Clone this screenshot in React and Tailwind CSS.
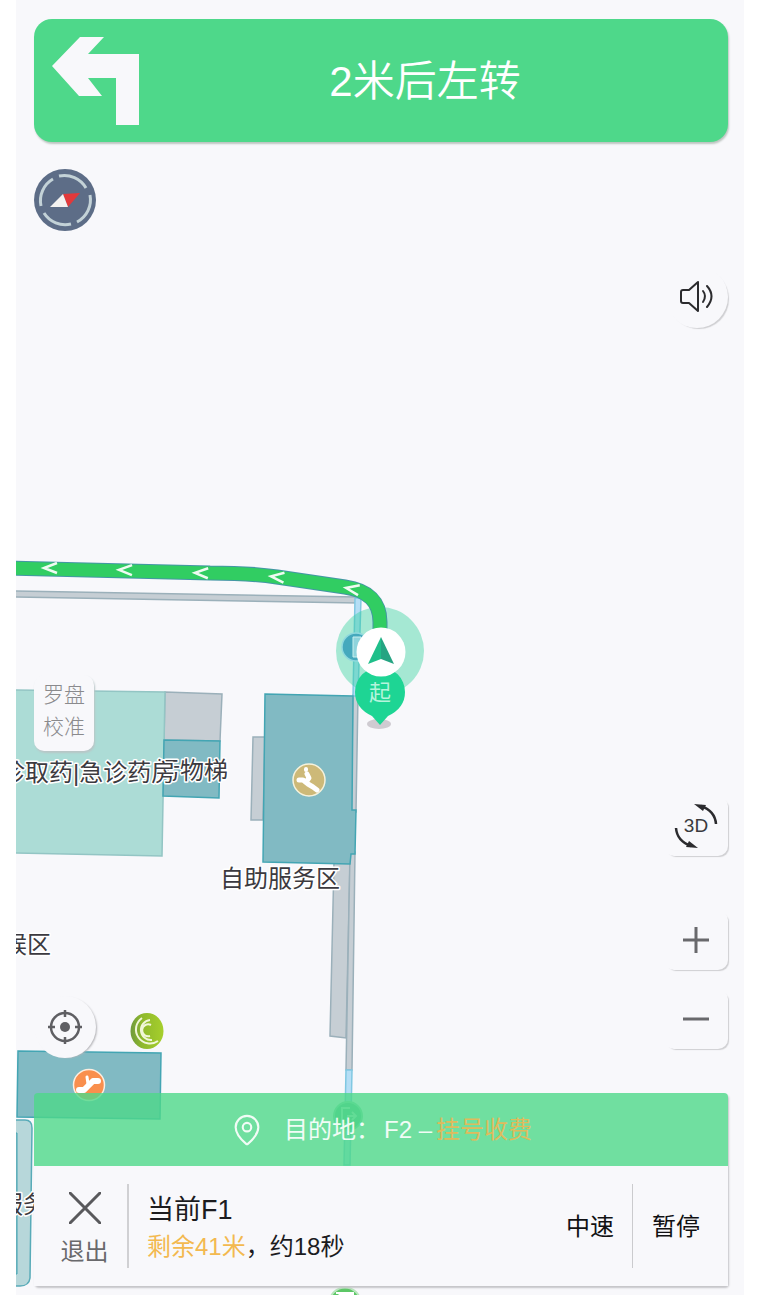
import { MapPin } from 'lucide-react';

const chevrons = [
  [50, 568, 0],
  [125, 570, 1],
  [201, 573, 2],
  [277, 577, 6],
  [352, 589, 10],
];

const labels = [
  { text: '污物梯', x: 156, y: 779 },
  { text: '诊取药|急诊药房', x: 1, y: 781 },
  { text: '自助服务区', x: 220, y: 887 },
  { text: '候区', x: 3, y: 953 },
  { text: '服务', x: -1, y: 1213 },
];

const routePath = 'M10 568L210 573Q250 573 277 577L345 587Q380 592 380 622V640';

function FloorMap() {
  return (
    <svg className="absolute inset-0 h-full w-full" aria-hidden="true">
      <defs>
        <linearGradient id="leaf" x1="0" y1="0" x2="1" y2="0">
          <stop offset="0" stopColor="#6f9a3c" />
          <stop offset="0.35" stopColor="#8fb92c" />
          <stop offset="1" stopColor="#a6cf2c" />
        </linearGradient>
      </defs>
      <g transform="translate(-16 0)">
        {/* corridors */}
        <g fill="#c6ced4" stroke="#9bb0ba" strokeWidth="1.5">
          <path d="M10 591L358 597V603L10 597Z" />
          <path d="M253 737H265L263 820H251Z" />
          <path d="M334 862H350L346 1038L330 1036Z" />
          <path d="M353 695H358L356 812H351Z" />
          <path d="M350 852H355L352 1070H346Z" />
          <path d="M165 692L222 694L220 741L164 740Z" />
        </g>
        <g fill="#b5def5" stroke="#80c8e2" strokeWidth="1.5">
          <path d="M355 598H361L358 696H353Z" />
          <path d="M346 1070H352L350 1165H344Z" />
        </g>

        {/* rooms */}
        <path d="M10 690L165 692L162 856L10 853Z" fill="#acdcd6" stroke="#93c5c4" strokeWidth="1.5" />
        <g fill="#81bac3" stroke="#43a5b3" strokeWidth="1.5">
          <path d="M164 740L220 741L219 798L163 796Z" />
          <path d="M265 694L353 696L352 810H356L355 854H351L350 864L263 862Z" />
          <path d="M18 1051L161 1053L160 1119L17 1117Z" />
        </g>
        <path
          d="M10 1120H25Q32 1120 32 1128L30 1278Q29 1286 20 1286H10Z"
          fill="#b7d7da"
          stroke="#58abb8"
          strokeWidth="1.5"
        />
        <path d="M10 1133H17V1274H10Z" fill="#81bac3" stroke="#43a5b3" />

        {/* stairs */}
        <circle cx="309" cy="780" r="16" fill="#cdb978" stroke="#f6f2dc" strokeWidth="1.5" />
        <g fill="none" stroke="#fff" strokeLinecap="round" strokeLinejoin="round">
          <path d="M299 780H303L308 784L313 787L317 790" strokeWidth="5" />
          <path d="M307 774L309 778L306 782" strokeWidth="5" />
          <path d="M306 769V770" strokeWidth="4" />
        </g>

        {/* escalator */}
        <circle cx="89" cy="1085" r="15.5" fill="#f98f4d" stroke="#fdeee0" strokeWidth="1.5" />
        <path d="M79 1090H84L93 1081H98" fill="none" stroke="#fff" strokeWidth="6" strokeLinecap="round" strokeLinejoin="round" />
        <path d="M87 1077L88 1084" stroke="#fff" strokeWidth="3" strokeLinecap="round" />

        {/* atm */}
        <ellipse cx="147" cy="1031" rx="16.5" ry="18" fill="url(#leaf)" />
        <g fill="none" stroke="#f1f7d8" strokeWidth="2">
          <path d="M142 1018A14 14 0 1 0 158 1041" />
          <path d="M150 1020A10 10 0 1 0 152 1040" />
          <path d="M151 1025A6 6 0 1 0 150 1036" />
        </g>

        {/* exits */}
        <g fill="none" strokeWidth="2">
          <circle cx="348" cy="1116" r="14" fill="#5fc08f" stroke="#8fdcae" />
          <path d="M350 1108H342V1124H350M347 1116H355M352 1112L356 1116L352 1120" stroke="#b5e8c8" />
          <circle cx="345" cy="1303" r="15.5" fill="#5cc766" stroke="#b9e6bd" />
          <path d="M336 1293H353V1303" fill="#fff" stroke="#fff" />
        </g>

        {/* current position */}
        <circle cx="380" cy="651" r="44" fill="#27cf99" fillOpacity="0.4" />
        <circle cx="356" cy="647" r="14" fill="#45a9bd" stroke="#8fd9dd" strokeWidth="1.5" />
        <path d="M353 637H361V657H353Z" fill="#8fd4dc" stroke="#c9f0ee" />

        {/* route */}
        <path d={routePath} fill="none" stroke="#4496a5" strokeWidth="15" />
        <path d={routePath} fill="none" stroke="#31cd62" strokeWidth="13" />
        {chevrons.map(([x, y, angle]) => (
          <path
            key={x}
            d="M7 -5L-6 0L7 5"
            fill="none"
            stroke="#f0fbf2"
            strokeWidth="2.5"
            transform={`translate(${x} ${y}) rotate(${angle})`}
          />
        ))}

        {/* start pin */}
        <ellipse cx="379" cy="724" rx="12" ry="5" fill="#cfcbd1" />
        <path d="M380 725L372 716Q355 708 355 692A25 25 0 0 1 405 692Q405 708 388 716Z" fill="#1ed594" />
        <text x="380" y="700" textAnchor="middle" fontSize="22" fill="#b5f4dc">起</text>
        <circle cx="381" cy="652" r="24.5" fill="#fff" />
        <path d="M381 637L368 664L381 659Z" fill="#1fbf8a" />
        <path d="M381 637L394 664L381 659Z" fill="#25a482" />

        {labels.map((l) => (
          <text
            key={l.text}
            x={l.x}
            y={l.y}
            fontSize="24"
            fill="#3c3a40"
            stroke="#fff"
            strokeWidth="3"
            strokeLinejoin="round"
            paintOrder="stroke"
          >
            {l.text}
          </text>
        ))}
      </g>
    </svg>
  );
}

function SquareButton({ label, className = '', children }) {
  return (
    <button
      type="button"
      aria-label={label}
      className={`flex h-[60px] w-16 items-center justify-center rounded-[10px] bg-[#f8f8fb] shadow-[2px_2px_1px_-1px_#cfcfd2] ${className}`}
    >
      {children}
    </button>
  );
}

function TurnBanner() {
  return (
    <header className="flex h-[123px] items-start rounded-[18px] bg-[#4ed88a] px-[18px] pt-[17px] shadow-[1px_2px_2px_#bcc5c0]">
      <svg width="88" height="89" viewBox="0 0 88 89" fill="#f8f8fb" aria-hidden="true">
        <path d="M0 30L28 1H52L36 18H87V89H64V42H36L50 60H27Z" />
      </svg>
      <h1 className="flex-1 text-center text-[42px] leading-[92px] font-[350] text-white">2米后左转</h1>
    </header>
  );
}

function MapControls() {
  return (
    <div className="flex flex-1 justify-between">
      <div className="flex flex-col pt-[27px] pb-[35px]">
        <button type="button" aria-label="指南针">
          <svg width="62" height="62" viewBox="0 0 62 62" fill="none" aria-hidden="true">
            <circle cx="31" cy="31" r="31" fill="#5d6d87" />
            <g stroke="#c3d2d7" strokeWidth="3">
              <path d="M25 7A25 25 0 0 1 52 19" />
              <path d="M56 26A25 25 0 0 1 43 53" />
              <path d="M37 55A25 25 0 0 1 10 44" />
              <path d="M7 37A25 25 0 0 1 19 10" />
            </g>
            <path d="M29 25L46 24L34 38Z" fill="#e2393b" />
            <path d="M29 25L16 38H34Z" fill="#f4f2f0" />
          </svg>
        </button>
        <button
          type="button"
          className="mt-auto w-[60px] rounded-[10px] bg-[#f8f8fb] px-2 pt-1 pb-2 text-[21px] leading-8 font-light text-[#8a8a8d] shadow-[1px_2px_2px_#b9c6c7]"
        >
          罗盘校准
        </button>
        <button
          type="button"
          aria-label="定位"
          className="mt-[245px] flex h-[62px] w-[62px] items-center justify-center rounded-full bg-[#f8f8fb] shadow-[2px_1px_2px_-1px_#b4b4b8]"
        >
          <svg width="36" height="36" viewBox="0 0 36 36" fill="none" stroke="#5f5f63" strokeWidth="2.5" aria-hidden="true">
            <circle cx="18" cy="18" r="14" />
            <circle cx="18" cy="18" r="5" fill="#5f5f63" stroke="none" />
            <path d="M18 1V8M18 28V35M1 18H8M28 18H35" />
          </svg>
        </button>
      </div>

      <div className="flex flex-col items-end pt-[124px] pb-11">
        <button
          type="button"
          aria-label="声音"
          className="flex h-[62px] w-[62px] items-center justify-center rounded-full bg-[#f8f8fb] shadow-[2px_2px_1px_-1px_#cfcfd2]"
        >
          <svg
            width="34"
            height="34"
            viewBox="0 0 34 34"
            fill="none"
            stroke="#2b2b2e"
            strokeWidth="2"
            strokeLinecap="round"
            strokeLinejoin="round"
            aria-hidden="true"
          >
            <path d="M3 10H9L18 2V31L9 23H3Q1 23 1 21V12Q1 10 3 10Z" />
            <path d="M23 11Q27 16 23 22" />
            <path d="M27 6Q36 16 27 27" />
          </svg>
        </button>
        <SquareButton label="3D" className="mt-auto">
          <svg width="44" height="44" viewBox="0 0 44 44" fill="none" stroke="#2b2b2e" strokeWidth="2.5" aria-hidden="true">
            <path d="M27 2Q41 7 42 20" />
            <path d="M20 0L32 1L29 7Z" fill="#2b2b2e" stroke="none" />
            <path d="M2 24Q3 37 17 42" />
            <path d="M24 44L12 43L15 37Z" fill="#2b2b2e" stroke="none" />
            <text x="22" y="28" textAnchor="middle" fontSize="19" fill="#3a3a3d" stroke="none">
              3D
            </text>
          </svg>
        </SquareButton>
        <SquareButton label="放大" className="mt-[54px]">
          <svg width="26" height="26" viewBox="0 0 26 26" stroke="#69696c" strokeWidth="3" aria-hidden="true">
            <path d="M13 0V26M0 13H26" />
          </svg>
        </SquareButton>
        <SquareButton label="缩小" className="mt-[19px]">
          <svg width="26" height="26" viewBox="0 0 26 26" stroke="#69696c" strokeWidth="3" aria-hidden="true">
            <path d="M0 13H26" />
          </svg>
        </SquareButton>
      </div>
    </div>
  );
}

function RoutePanel() {
  return (
    <section className="rounded-sm shadow-[1px_2px_2px_#c4c4c8]">
      <div className="flex h-[73px] items-center justify-center gap-5 rounded-t-sm bg-[#4ed88a]/80 text-2xl text-white/90">
        <MapPin size={34} strokeWidth={1.5} aria-hidden="true" />
        <p className="flex gap-1 whitespace-pre">
          <span>目的地：</span>
          <span>F2 –</span>
          <span className="text-[#dfbb5c]">挂号收费</span>
        </p>
      </div>
      <div className="flex h-[120px] items-center bg-[#f8f8fb]">
        <button
          type="button"
          className="flex h-[84px] w-[95px] flex-col items-center justify-between border-r-2 border-[#d0d0d3] pt-2 pl-2 text-2xl leading-8 text-[#69696c]"
        >
          <svg width="32" height="32" viewBox="0 0 32 32" stroke="#59595c" strokeWidth="3" strokeLinecap="round" aria-hidden="true">
            <path d="M1 1L31 31M31 1L1 31" />
          </svg>
          退出
        </button>
        <div className="flex-1 pt-1 pl-[18px]">
          <p className="text-[27px] leading-[38px] text-[#1c1c1f]">当前F1</p>
          <p className="text-2xl leading-9 text-[#1c1c1f]">
            <span className="text-[#f3b94f]">剩余41米</span>，约18秒
          </p>
        </div>
        <button type="button" className="h-[84px] border-r border-[#cbcbce] px-[18px] pt-0.5 text-2xl text-[#111113]">
          中速
        </button>
        <button type="button" className="h-[84px] pt-0.5 pr-7 pl-[19px] text-2xl text-[#111113]">
          暂停
        </button>
      </div>
    </section>
  );
}

export default function App() {
  return (
    <div className="min-h-screen bg-white px-4 font-['Liberation_Sans','Noto_Sans_CJK_SC',sans-serif]">
      <main className="relative flex min-h-screen flex-col overflow-hidden bg-[#f8f8fb]">
        <FloorMap />
        <div className="relative flex flex-1 flex-col pt-[19px] pr-4 pb-[9px] pl-[18px]">
          <TurnBanner />
          <MapControls />
          <RoutePanel />
        </div>
      </main>
    </div>
  );
}
